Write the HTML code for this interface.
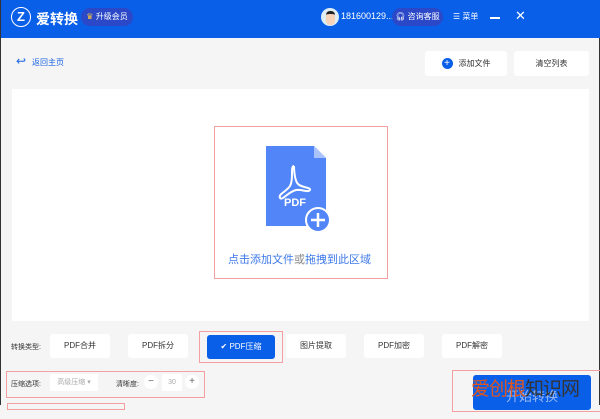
<html><head><style>
body{margin:0;width:600px;height:405px;overflow:hidden;background:#f5f5f5;font-family:"Liberation Sans","Noto Sans CJK SC",sans-serif;position:relative;border-left:1px solid #333;border-right:1px solid #333;box-sizing:border-box}
.a{position:absolute}
.hdr{left:0;top:0;width:600px;height:38px;background:#0a5fe8}
.btn{position:absolute;background:#fff;border-radius:3px;font-size:8px;color:#333;text-align:center;line-height:24px;height:24px;width:60px}
.red{position:absolute;border:1px solid #f4a0a0}
</style></head><body>
<div class="a hdr"></div>
<div class="a" style="left:10px;top:7px;width:20px;height:20px;border:1.5px solid #fff;border-radius:50%;box-sizing:border-box;color:#fff;font-weight:bold;font-size:13px;text-align:center;line-height:17px">Z</div>
<div class="a" style="left:35px;top:9px;color:#fff;font-size:14px;font-weight:bold">爱转换</div>
<div class="a" style="left:80px;top:8px;width:52px;height:18px;background:#2a48c8;border-radius:9px;color:#fff;font-size:8px;line-height:18px;text-align:center"><span style="color:#ffc830">♛</span> 升级会员</div>
<div class="a" style="left:320px;top:8px;width:18px;height:18px;border-radius:50%;background:#dfeef6;overflow:hidden"><div style="margin:3px auto;width:9px;height:11px;background:#f5d2b8;border-radius:4px;border-top:3px solid #222"></div></div>
<div class="a" style="left:340px;top:11px;color:#fff;font-size:9px">181600129...</div>
<div class="a" style="left:391px;top:8px;width:51px;height:18px;background:#2a48c8;border-radius:9px;color:#fff;font-size:8px;line-height:18px;text-align:center">🎧︎ 咨询客服</div>
<div class="a" style="left:452px;top:11px;color:#fff;font-size:8px">☰ 菜单</div>
<div class="a" style="left:489px;top:17px;width:10px;height:1.5px;background:#fff"></div>
<div class="a" style="left:514px;top:8px;color:#fff;font-size:13px">✕</div>
<div class="a" style="left:15px;top:54px;color:#1a64e0;font-size:12px">↩</div>
<div class="a" style="left:31px;top:57px;color:#1a64e0;font-size:8px">返回主页</div>
<div class="btn" style="left:424px;top:51px;width:82px;height:25px;line-height:25px"><span style="display:inline-block;width:11px;height:11px;border-radius:50%;background:#0a5fe8;color:#fff;font-size:10px;line-height:11px;vertical-align:middle;margin-right:6px">+</span>添加文件</div>
<div class="btn" style="left:513px;top:51px;width:75px;height:25px;line-height:25px">清空列表</div>
<div class="a" style="left:11px;top:89px;width:577px;height:232px;background:#fff"></div>
<div class="red" style="left:213px;top:126px;width:172px;height:151px"></div>
<svg class="a" style="left:263px;top:144px" width="72" height="92"><path d="M2 2H50L62 14V82H2Z" fill="#5286f8"/><path d="M50 2V14H62Z" fill="#a9c2fb"/><path d="M30 22c-4 0 0 14 -4 20c-4 6-12 8-10 12c2 3 8-6 16-8c6-1 12 3 14 0c1-3-8-2-12-6c-4-4-4-18-4-18" stroke="#fff" stroke-width="2" fill="none"/><text x="20" y="62" fill="#fff" font-size="11" font-weight="bold" font-family="Liberation Sans">PDF</text><circle cx="54" cy="76" r="12" fill="#5286f8" stroke="#fff" stroke-width="2"/><path d="M54 69V83M47 76H61" stroke="#fff" stroke-width="2.5"/></svg>
<div class="a" style="left:227px;top:251px;color:#3d78e8;font-size:11px">点击添加文件<span style="color:#888">或</span>拖拽到此区域</div>
<div class="a" style="left:10px;top:342px;font-size:7px;color:#333">转换类型:</div>
<div class="btn" style="left:49px;top:334px">PDF合并</div>
<div class="btn" style="left:127px;top:334px">PDF拆分</div>
<div class="red" style="left:198px;top:331px;width:82px;height:30px"></div>
<div class="btn" style="left:206px;top:335px;background:#0a5fe8;color:#fff;width:68px">✔ PDF压缩</div>
<div class="btn" style="left:285px;top:334px">图片提取</div>
<div class="btn" style="left:363px;top:334px">PDF加密</div>
<div class="btn" style="left:441px;top:334px">PDF解密</div>
<div class="red" style="left:5px;top:371px;width:197px;height:25px"></div>
<div class="a" style="left:10px;top:379px;font-size:7px;color:#333">压缩选项:</div>
<div class="a" style="left:49px;top:374px;width:48px;height:17px;background:#fff;font-size:7px;color:#aaa;line-height:17px;text-align:center">高级压缩 ▾</div>
<div class="a" style="left:115px;top:379px;font-size:7px;color:#333">清晰度:</div>
<div class="a" style="left:143px;top:375px;width:14px;height:14px;border-radius:50%;background:#fff;text-align:center;line-height:13px;font-size:10px;color:#666">−</div>
<div class="a" style="left:161px;top:374px;width:20px;height:17px;background:#fff;text-align:center;line-height:17px;font-size:7px;color:#aaa">30</div>
<div class="a" style="left:184px;top:375px;width:14px;height:14px;border-radius:50%;background:#fff;text-align:center;line-height:13px;font-size:10px;color:#666">+</div>
<div class="red" style="left:6px;top:403px;width:116px;height:5px"></div>
<div class="red" style="left:451px;top:370px;width:150px;height:40px"></div>
<div class="a" style="left:472px;top:375px;width:118px;height:35px;background:#0a5fe8;border-radius:3px;color:#9ab8f0;font-size:13px;text-align:center;line-height:44px">开始转换</div>
<div class="a" style="left:470px;top:374px;font-size:19px;letter-spacing:-1px"><span style="color:#e2551c">爱创根</span><span style="color:#333">知识网</span></div>
</body></html>
